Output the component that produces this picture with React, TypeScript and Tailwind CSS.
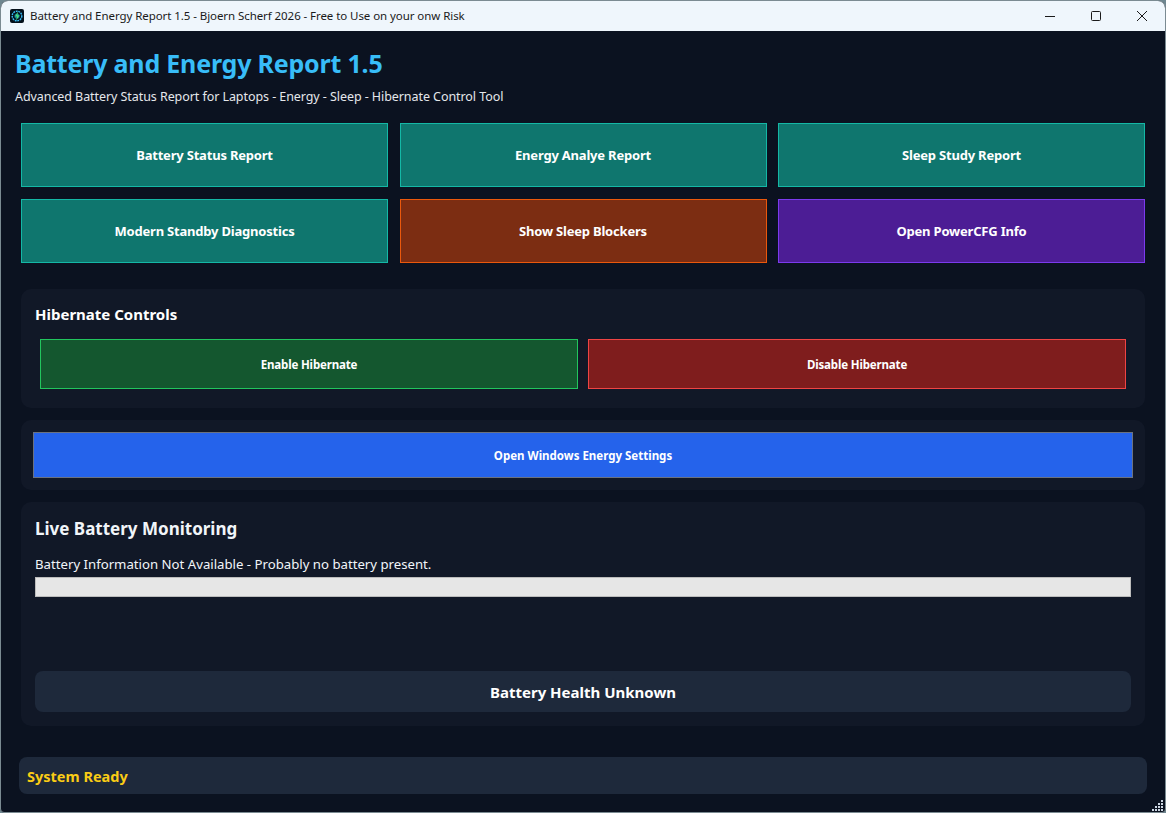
import React from 'react';

const FONT = "font-['Noto_Sans','Open_Sans',sans-serif]";

const reportButtons = [
  { label: 'Battery Status Report', color: 'bg-[#0f766e] border-[#14b8a6]' },
  { label: 'Energy Analye Report', color: 'bg-[#0f766e] border-[#14b8a6]' },
  { label: 'Sleep Study Report', color: 'bg-[#0f766e] border-[#14b8a6]' },
  { label: 'Modern Standby Diagnostics', color: 'bg-[#0f766e] border-[#14b8a6]' },
  { label: 'Show Sleep Blockers', color: 'bg-[#7c2d12] border-[#ea580c]' },
  { label: 'Open PowerCFG Info', color: 'bg-[#4c1d95] border-[#7c3aed]' },
];

// App-Icon in der Titelleiste
const AppIcon: React.FC = () => (
  <svg width="14" height="14" viewBox="0 0 14 14" className="shrink-0">
    <rect width="14" height="14" rx="2" fill="#04101a" />
    <circle cx="7" cy="7" r="4.8" fill="none" stroke="#38bdf8" strokeWidth="1.4" strokeDasharray="1.8 0.8" />
    <circle cx="7" cy="7" r="2.6" fill="#0e7490" />
    <path d="M8 2.5 5 7.5h2L6 11.8l3.6-5.5H7.4z" fill="#4ade80" />
  </svg>
);

const App: React.FC = () => {
  return (
    <div className={`w-[1166px] h-[813px] bg-[#6f8791] overflow-hidden ${FONT}`}>
      <div className="w-full h-full flex flex-col rounded-t-lg rounded-b-[4px] overflow-hidden border border-[#7b8b92] bg-[#0b1220]">
        {/* Titelleiste */}
        <div className="h-[30px] shrink-0 bg-[#eff6fc] flex items-center pl-[9px]">
          <AppIcon />
          <span className="ml-[6px] text-[11.5px] tracking-[-0.07px] text-[#1a1a1a]">
            Battery and Energy Report 1.5 - Bjoern Scherf 2026 - Free to Use on your onw Risk
          </span>
          <div className="ml-auto flex items-center text-[#1a1a1a]">
            <div className="w-[46px] h-[30px] flex items-center justify-center">
              <svg width="10" height="10" viewBox="0 0 10 10"><path d="M0 5.5h10" stroke="#1a1a1a" strokeWidth="1" /></svg>
            </div>
            <div className="w-[46px] h-[30px] flex items-center justify-center">
              <svg width="10" height="10" viewBox="0 0 10 10"><rect x="0.5" y="0.5" width="9" height="9" rx="1" fill="none" stroke="#1a1a1a" strokeWidth="1" /></svg>
            </div>
            <div className="w-[46px] h-[30px] flex items-center justify-center">
              <svg width="10" height="10" viewBox="0 0 10 10"><path d="M0 0l10 10M10 0 0 10" stroke="#1a1a1a" strokeWidth="1" /></svg>
            </div>
          </div>
        </div>

        {/* Inhalt */}
        <div className="flex-1 flex flex-col relative">
          <div className="pl-[14px] pt-[14px]">
            <h1 className="text-[25px] leading-[36px] tracking-[-0.2px] font-bold text-[#38bdf8]">Battery and Energy Report 1.5</h1>
            <p className="mt-[7px] text-[12.5px] leading-[18px] tracking-[-0.07px] text-[#e5e7eb]">
              Advanced Battery Status Report for Laptops - Energy - Sleep - Hibernate Control Tool
            </p>
          </div>

          <div className="mt-[17px] mx-[20px] grid grid-cols-3 gap-x-[11.5px] gap-y-[12px]">
            {reportButtons.map((btn) => (
              <button key={btn.label} className={`h-[64px] border pt-[1px] text-[13px] tracking-[-0.2px] font-bold text-white ${btn.color}`}>
                {btn.label}
              </button>
            ))}
          </div>

          <div className="mt-[26px] mx-[20px] h-[119px] rounded-[10px] bg-[#111827] pl-[14px] pr-[19px]">
            <h2 className="pt-[14px] text-[15px] leading-[22px] font-bold text-white">Hibernate Controls</h2>
            <div className="mt-[14px] ml-[5px] flex gap-[10px]">
              <button className="flex-1 h-[50px] border border-[#22c55e] bg-[#14572f] pt-[2px] text-[11.5px] tracking-[-0.15px] font-bold text-white">Enable Hibernate</button>
              <button className="flex-1 h-[50px] border border-[#ef4444] bg-[#7f1d1d] pt-[2px] text-[11.5px] tracking-[-0.15px] font-bold text-white">Disable Hibernate</button>
            </div>
          </div>

          <div className="mt-[12px] mx-[20px] h-[70px] rounded-[10px] bg-[#111827] px-[12px] py-[12px]">
            <button className="w-full h-[46px] border border-[#6b7280] bg-[#2563eb] pt-[2px] text-[11.5px] font-bold text-white">Open Windows Energy Settings</button>
          </div>

          <div className="mt-[12px] mx-[20px] h-[224px] rounded-[10px] bg-[#111827] px-[14px] flex flex-col">
            <h2 className="pt-[14px] text-[17px] leading-[26px] font-bold text-[#f1f5f9]">Live Battery Monitoring</h2>
            <p className="mt-[12px] text-[13.2px] leading-[20px] text-[#f1f5f9]">Battery Information Not Available - Probably no battery present.</p>
            <div className="mt-[3px] h-[20px] border border-[#bcbcbc] bg-[#e6e6e6]" />
            <div className="mt-[74px] h-[41px] rounded-[8px] bg-[#1e293b] flex items-center justify-center pt-[2px] text-[15px] font-bold text-white">
              Battery Health Unknown
            </div>
          </div>

          <div className="mt-[31px] mx-[18px] h-[37px] rounded-[8px] bg-[#1e293b] flex items-center pl-[8px] pt-[3px] text-[14.5px] font-bold text-[#facc15]">
            System Ready
          </div>

          {/* Resize-Griff */}
          <svg width="12" height="12" viewBox="0 0 12 12" className="absolute right-[1px] bottom-[1px]" fill="#cbd5e1">
            <rect x="9" y="1" width="2" height="2" />
            <rect x="6" y="4" width="2" height="2" /><rect x="9" y="4" width="2" height="2" />
            <rect x="3" y="7" width="2" height="2" /><rect x="6" y="7" width="2" height="2" /><rect x="9" y="7" width="2" height="2" />
            <rect x="0" y="10" width="2" height="2" /><rect x="3" y="10" width="2" height="2" /><rect x="6" y="10" width="2" height="2" /><rect x="9" y="10" width="2" height="2" />
          </svg>
        </div>
      </div>
    </div>
  );
};

export default App;
